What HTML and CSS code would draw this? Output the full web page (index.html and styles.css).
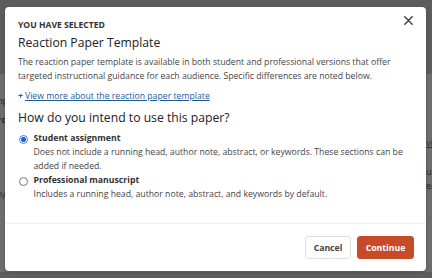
FILE: index.html
```html
<!DOCTYPE html>
<html>
<head>
<meta charset="utf-8">
<link rel="stylesheet" href="styles.css">
</head>
<body>
<div class="backdrop">
  <span class="bg-frag f1">Temp</span>
  <span class="bg-frag f2">Pro</span>
  <span class="bg-frag f3">APA</span>
  <span class="bg-frag f4">vi</span>
  <span class="bg-frag f5">u</span>
  <span class="bg-frag f6">ea</span>
</div>
<div class="modal">
  <div class="modal-body">
    <div class="eyebrow">YOU HAVE SELECTED</div>
    <button class="close" aria-label="Close">
      <svg width="9" height="9" viewBox="0 0 9 9"><path d="M0.8 0.8L8.2 8.2M8.2 0.8L0.8 8.2" stroke="#444" stroke-width="1.5" stroke-linecap="round"/></svg>
    </button>
    <h1 class="title">Reaction Paper Template</h1>
    <p class="intro">The reaction paper template is available in both student and professional versions that offer targeted instructional guidance for each audience. Specific differences are noted below.</p>
    <a class="more" href="#"><span class="plus">+</span><span class="more-text">View more about the reaction paper template</span></a>
    <h2 class="question">How do you intend to use this paper?</h2>
    <div class="options">
      <label class="option">
        <span class="radio checked"></span>
        <span class="opt-text">
          <span class="opt-title">Student assignment</span>
          <span class="opt-desc">Does not include a running head, author note, abstract, or keywords. These sections can be added if needed.</span>
        </span>
      </label>
      <label class="option">
        <span class="radio"></span>
        <span class="opt-text">
          <span class="opt-title">Professional manuscript</span>
          <span class="opt-desc">Includes a running head, author note, abstract, and keywords by default.</span>
        </span>
      </label>
    </div>
  </div>
  <div class="modal-footer">
    <button class="btn btn-cancel">Cancel</button>
    <button class="btn btn-continue">Continue</button>
  </div>
</div>
</body>
</html>
```
FILE: styles.css
```css
html, body {
  margin: 0;
  padding: 0;
}
body {
  width: 432px;
  height: 278px;
  background: #6b6b6b;
  font-family: "Open Sans", "Noto Sans", sans-serif;
  position: relative;
  overflow: hidden;
}
.backdrop {
  position: absolute;
  inset: 0;
  overflow: hidden;
  background: linear-gradient(#5c5c5c 0, #5c5c5c 74px, #6d6d6d 74px, #6d6d6d 272px, #5e5e5e 272px);
}
.bg-frag {
  position: absolute;
  font-size: 9px;
  line-height: 11px;
  color: #252525;
}
.f1 { right: 424px; top: 95px; }
.f2 { right: 425px; top: 114px; font-weight: 700; }
.f3 { right: 424px; top: 190px; }
.f4 { left: 426px; top: 137px; color: #1b3656; text-decoration: underline; }
.f5 { left: 426px; top: 166px; }
.f6 { left: 426px; top: 180px; }

.modal {
  position: absolute;
  left: 5px;
  top: 7px;
  width: 421px;
  height: 264px;
  background: #fff;
  border-radius: 4px;
  display: flex;
  flex-direction: column;
  box-shadow: 0 1px 3px rgba(0,0,0,0.25);
  z-index: 1;
}
.modal-body {
  position: relative;
  padding: 12px 13px 0 13px;
  flex: 1;
}
.eyebrow {
  font-size: 8.6px;
  font-weight: 700;
  color: #333;
  line-height: 13px;
}
.close {
  position: absolute;
  right: 13px;
  top: 9px;
  border: 0;
  background: none;
  padding: 0;
  width: 9px;
  height: 9px;
  display: flex;
}
.title {
  margin: 3px 0 0 0;
  font-size: 12.2px;
  font-weight: 400;
  color: #222;
  line-height: 16px;
}
.intro {
  margin: 5px 0 0 0;
  font-size: 8.7px;
  line-height: 13.5px;
  color: #444;
}
.more {
  display: block;
  margin-top: 6.5px;
  font-size: 8.7px;
  line-height: 13.5px;
  color: #1d5c96;
  text-decoration: none;
}
.plus {
  font-weight: 700;
  margin-right: 2px;
}
.more-text {
  text-decoration: underline;
}
.question {
  margin: 6.5px 0 0 0;
  font-size: 12.2px;
  font-weight: 400;
  color: #222;
  line-height: 16px;
}
.options {
  margin-top: 5px;
  display: flex;
  flex-direction: column;
  gap: 0;
}
.option {
  display: flex;
  gap: 6px;
  align-items: flex-start;
}
.radio {
  flex: none;
  width: 7px;
  height: 7px;
  border: 1px solid #777;
  border-radius: 50%;
  margin-top: 4px;
  margin-left: 0.5px;
  box-sizing: content-box;
}
.radio.checked {
  border-color: #3f7fe6;
  background: radial-gradient(circle, #1a64e0 0, #1a64e0 2.2px, #fff 2.8px);
}
.opt-text {
  display: flex;
  flex-direction: column;
}
.opt-title {
  font-size: 8.7px;
  font-weight: 700;
  color: #333;
  line-height: 14px;
}
.opt-desc {
  font-size: 8.7px;
  color: #444;
  line-height: 14px;
}
.modal-footer {
  border-top: 1px solid #f0f0f0;
  height: 47px;
  display: flex;
  justify-content: flex-end;
  align-items: center;
  gap: 6px;
  padding: 0 12px;
}
.btn {
  font-family: "Open Sans", "Noto Sans", sans-serif;
  font-size: 8.7px;
  font-weight: 700;
  height: 23px;
  border-radius: 3px;
  padding: 0;
  cursor: pointer;
}
.btn-cancel {
  background: #fff;
  border: 1px solid #dedede;
  color: #444;
  width: 46px;
}
.btn-continue {
  background: #c84b29;
  border: 1px solid #c84b29;
  color: #fff;
  width: 57px;
}
```
